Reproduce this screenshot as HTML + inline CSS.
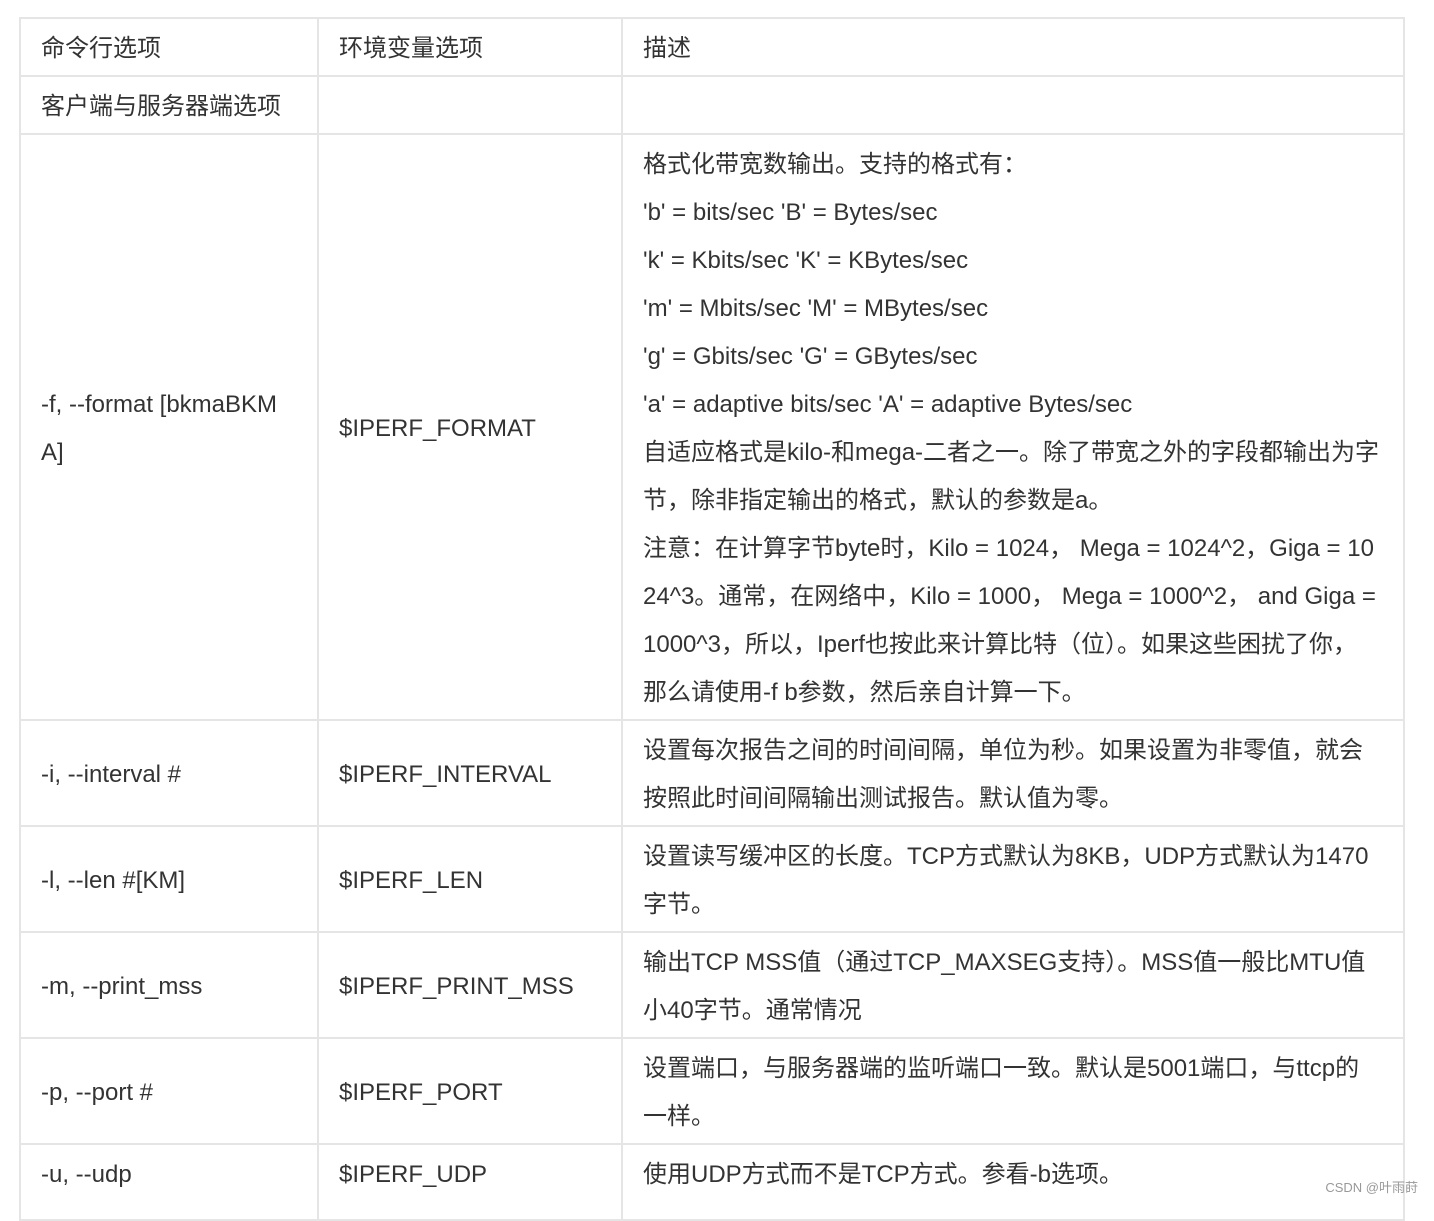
<!DOCTYPE html>
<html><head><meta charset="utf-8"><style>
body{margin:0;background:#fff;width:1434px;height:1202px;overflow:hidden;position:relative;font-family:"Liberation Sans","Noto Sans CJK SC",sans-serif;}
table{position:absolute;left:19px;top:17px;border-collapse:collapse;table-layout:fixed;width:1386px;color:#333;font-size:24px;}
td{border:2px solid #e5e5e5;padding:6px 20px 2px;line-height:48px;vertical-align:middle;white-space:nowrap;overflow:hidden;}
tr.last td{padding-bottom:20px;vertical-align:top;padding-top:6px;}
.w{position:absolute;right:16px;bottom:6px;font-size:13px;color:#999;}
</style></head><body>
<table>
<col style="width:298px"><col style="width:304px"><col style="width:782px">
<tr><td>命令行选项</td><td>环境变量选项</td><td>描述</td></tr>
<tr><td>客户端与服务器端选项</td><td></td><td></td></tr>
<tr><td>-f, --format [bkmaBKM<br>A]</td><td>$IPERF_FORMAT</td><td>格式化带宽数输出。支持的格式有：<br>'b' = bits/sec 'B' = Bytes/sec<br>'k' = Kbits/sec 'K' = KBytes/sec<br>'m' = Mbits/sec 'M' = MBytes/sec<br>'g' = Gbits/sec 'G' = GBytes/sec<br>'a' = adaptive bits/sec 'A' = adaptive Bytes/sec<br>自适应格式是kilo-和mega-二者之一。除了带宽之外的字段都输出为字<br>节，除非指定输出的格式，默认的参数是a。<br>注意：在计算字节byte时，Kilo = 1024， Mega = 1024^2，Giga = 10<br>24^3。通常，在网络中，Kilo = 1000， Mega = 1000^2， and Giga =<br>1000^3，所以，Iperf也按此来计算比特（位）。如果这些困扰了你，<br>那么请使用-f b参数，然后亲自计算一下。</td></tr>
<tr><td>-i, --interval #</td><td>$IPERF_INTERVAL</td><td>设置每次报告之间的时间间隔，单位为秒。如果设置为非零值，就会<br>按照此时间间隔输出测试报告。默认值为零。</td></tr>
<tr><td>-l, --len #[KM]</td><td>$IPERF_LEN</td><td>设置读写缓冲区的长度。TCP方式默认为8KB，UDP方式默认为1470<br>字节。</td></tr>
<tr><td>-m, --print_mss</td><td>$IPERF_PRINT_MSS</td><td>输出TCP MSS值（通过TCP_MAXSEG支持）。MSS值一般比MTU值<br>小40字节。通常情况</td></tr>
<tr><td>-p, --port #</td><td>$IPERF_PORT</td><td>设置端口，与服务器端的监听端口一致。默认是5001端口，与ttcp的<br>一样。</td></tr>
<tr class="last"><td>-u, --udp</td><td>$IPERF_UDP</td><td>使用UDP方式而不是TCP方式。参看-b选项。</td></tr>
</table>
<div class="w">CSDN @叶雨莳</div>
</body></html>
